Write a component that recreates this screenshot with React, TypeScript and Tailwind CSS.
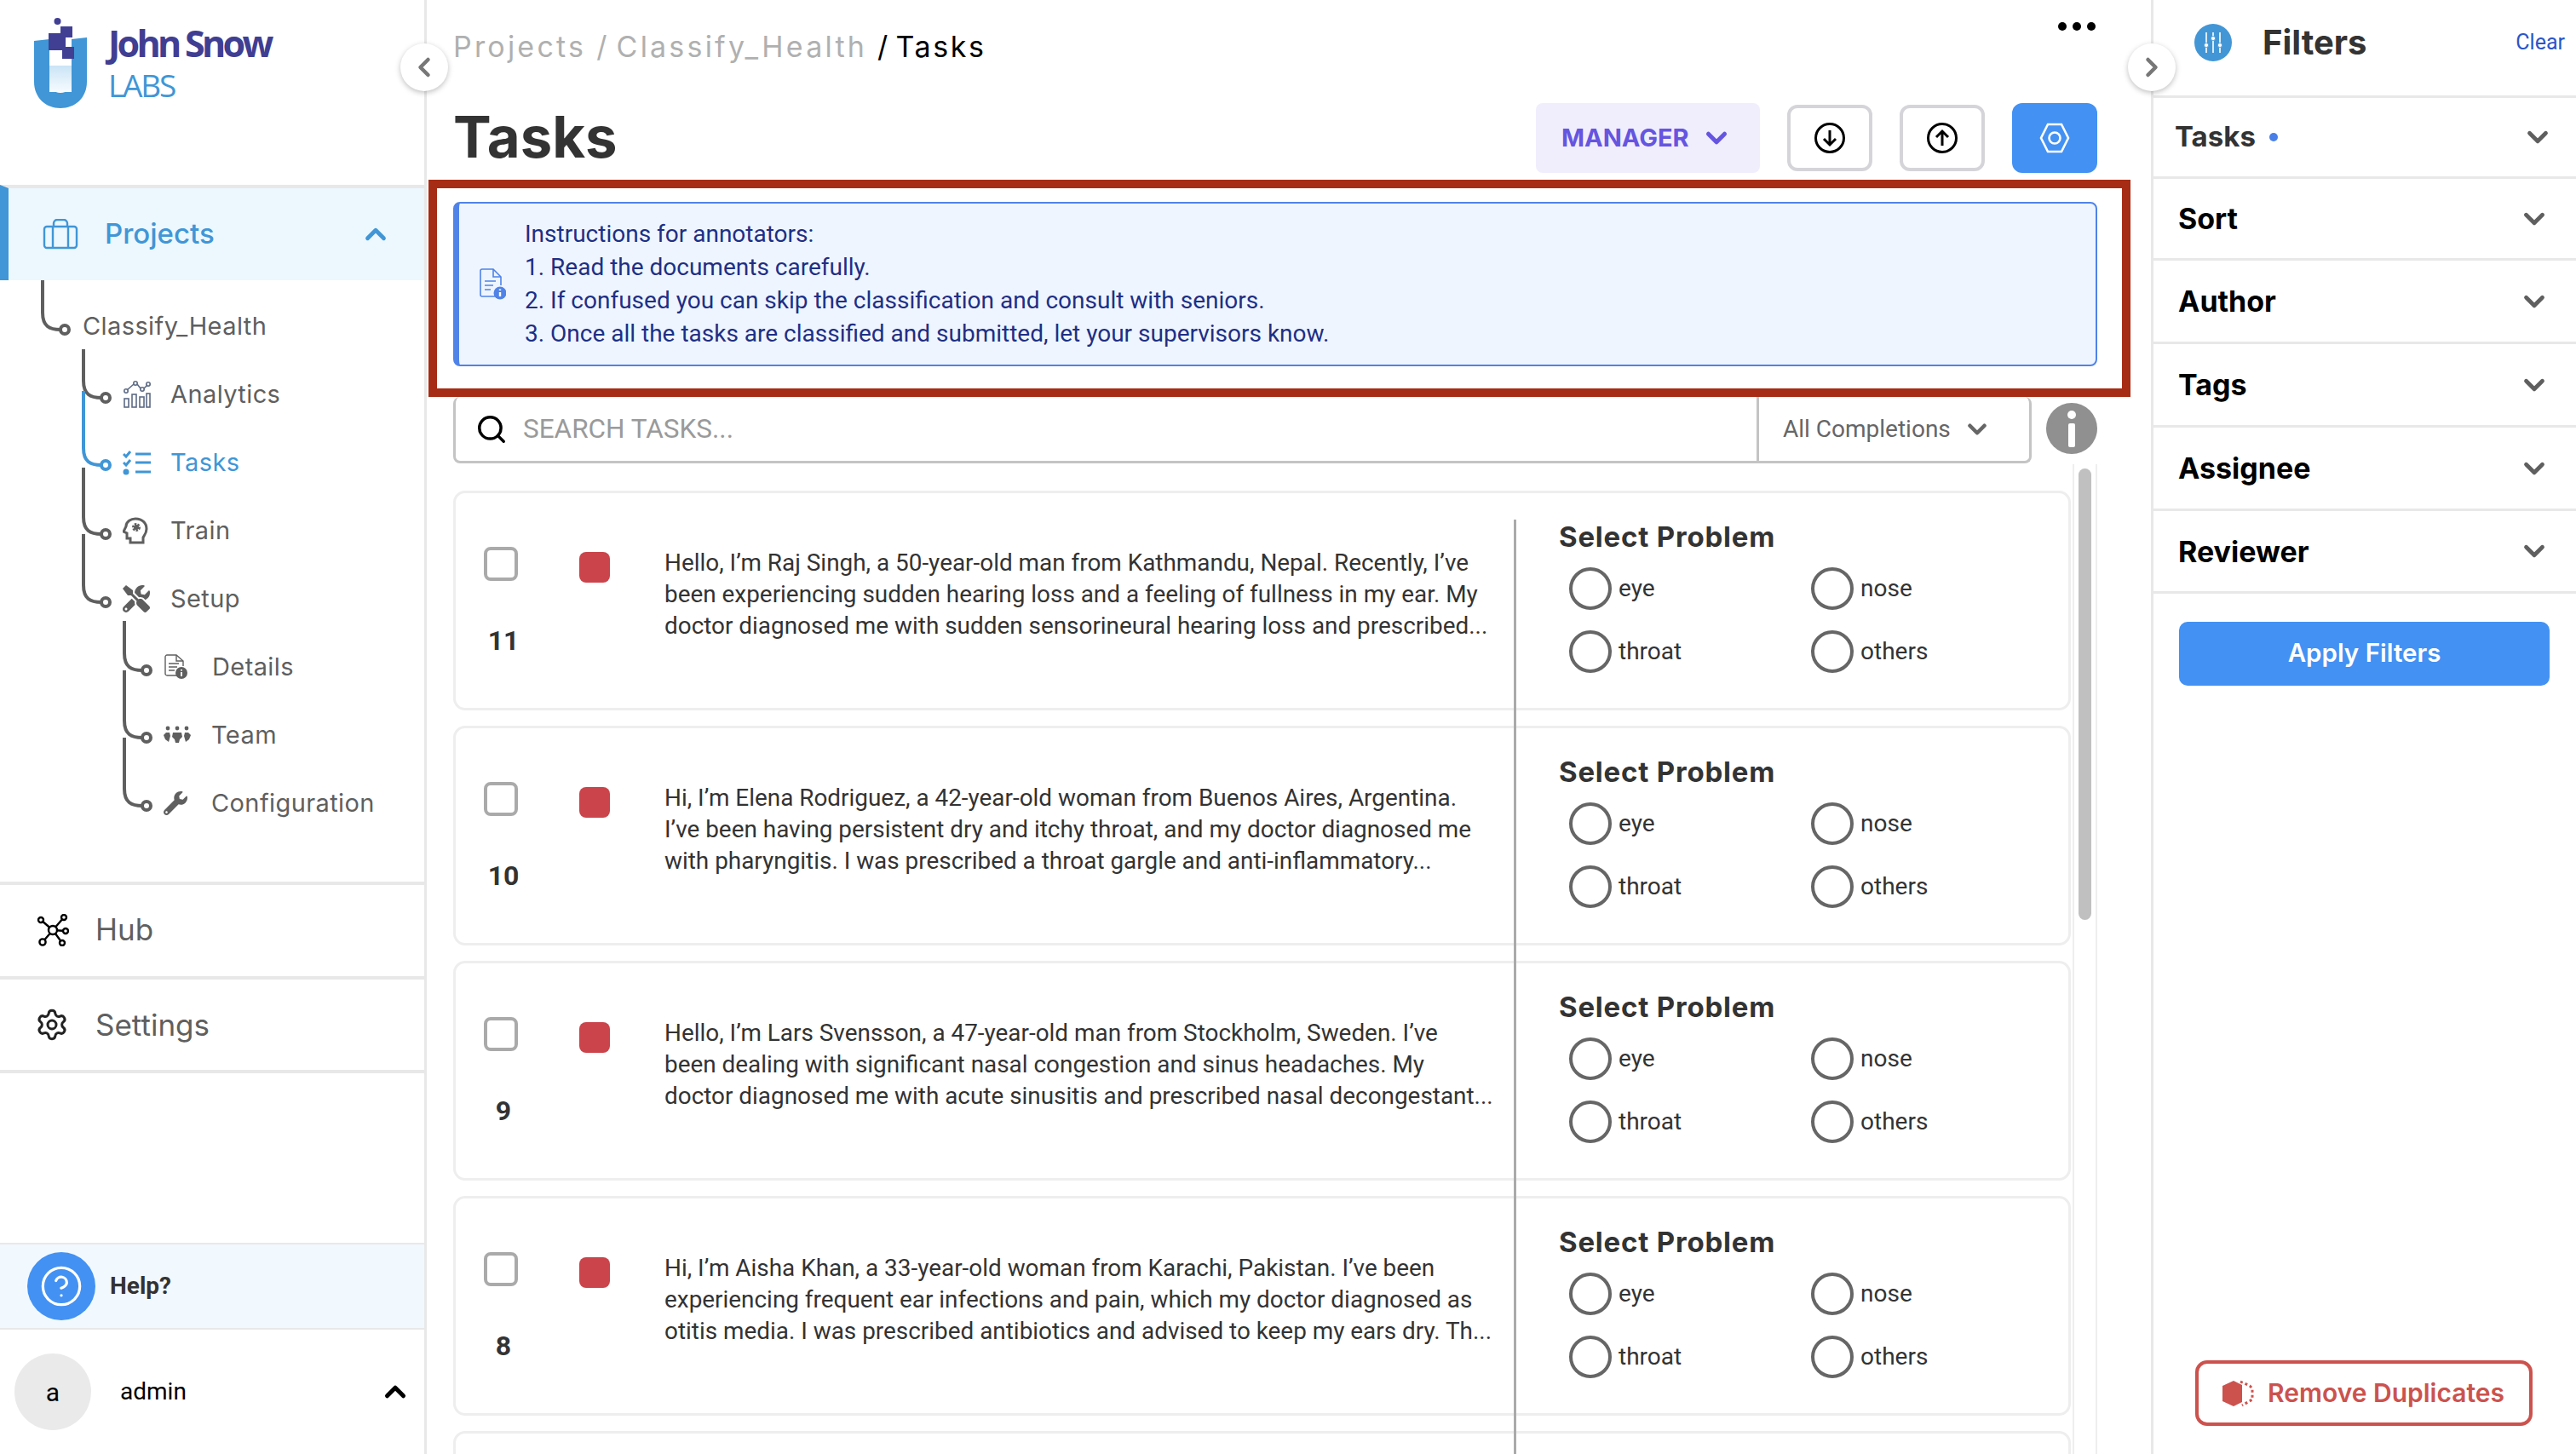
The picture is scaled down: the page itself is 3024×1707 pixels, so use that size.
import { ChevronDown, ChevronLeft, ChevronRight, ChevronUp, Search, Settings, CircleHelp } from "lucide-react";
import { FaTools, FaWrench } from "react-icons/fa";

const heading = "[font-family:Inter,sans-serif]";

const tasks = [
    {
        id: 11,
        lines: [
            "Hello, I’m Raj Singh, a 50-year-old man from Kathmandu, Nepal. Recently, I’ve",
            "been experiencing sudden hearing loss and a feeling of fullness in my ear. My",
            "doctor diagnosed me with sudden sensorineural hearing loss and prescribed...",
        ],
    },
    {
        id: 10,
        lines: [
            "Hi, I’m Elena Rodriguez, a 42-year-old woman from Buenos Aires, Argentina.",
            "I’ve been having persistent dry and itchy throat, and my doctor diagnosed me",
            "with pharyngitis. I was prescribed a throat gargle and anti-inflammatory...",
        ],
    },
    {
        id: 9,
        lines: [
            "Hello, I’m Lars Svensson, a 47-year-old man from Stockholm, Sweden. I’ve",
            "been dealing with significant nasal congestion and sinus headaches. My",
            "doctor diagnosed me with acute sinusitis and prescribed nasal decongestant...",
        ],
    },
    {
        id: 8,
        lines: [
            "Hi, I’m Aisha Khan, a 33-year-old woman from Karachi, Pakistan. I’ve been",
            "experiencing frequent ear infections and pain, which my doctor diagnosed as",
            "otitis media. I was prescribed antibiotics and advised to keep my ears dry. Th...",
        ],
    },
];

const filters = [
    { label: "Sort", h: "h-[96px]" },
    { label: "Author", h: "h-[98px]" },
    { label: "Tags", h: "h-[98px]" },
    { label: "Assignee", h: "h-[98px]" },
    { label: "Reviewer", h: "h-[97px]" },
];

function Logo() {
    return (
        <svg width="112" height="130" viewBox="0 0 112 130" className="shrink-0">
            <defs>
                <linearGradient id="tube" x1="0" y1="0" x2="0" y2="1">
                    <stop offset="0" stopColor="#c9e4f6" />
                    <stop offset="1" stopColor="#f7fbfe" />
                </linearGradient>
            </defs>
            <path d="M40 48 L58 46 V96 C58 104 63 109 71 109 C79 109 84 104 84 96 V46 L102 44 V96 C102 115 88 127 71 127 C54 127 40 115 40 96 Z" fill="#4096d6" />
            <rect x="58" y="77" width="26" height="31" fill="url(#tube)" />
            <circle cx="67.5" cy="25" r="4" fill="#413f93" />
            <path d="M71 31 H85 V44 H77 V55 H87 V69 H73 V59 H57 V39 H71 Z" fill="#413f93" />
        </svg>
    );
}

function TreeLines() {
    // y coordinates are relative to the top of the tree, which starts at 329
    const elbow = (x: number, y0: number, y1: number, color: string) => (
        <g fill="none" stroke={color} strokeWidth="4">
            <path d={`M${x} ${y0} V${y1 - 20} C${x} ${y1 - 4} ${x + 8} ${y1} ${x + 21} ${y1}`} />
            <circle cx={x + 26} cy={y1} r="5" fill="#fff" />
        </g>
    );
    return (
        <svg width="200" height="706" className="absolute left-0 top-0">
            {elbow(50, 0, 58, "#5f5f5f")}
            {elbow(98, 81, 138, "#5f5f5f")}
            {elbow(98, 298, 378, "#5f5f5f")}
            {elbow(98, 220, 298, "#5f5f5f")}
            {elbow(98, 130, 217, "#4096d6")}
            {elbow(146, 400, 458, "#5f5f5f")}
            {elbow(146, 458, 537, "#5f5f5f")}
            {elbow(146, 537, 617, "#5f5f5f")}
        </svg>
    );
}

function AnalyticsIcon() {
    return (
        <svg width="34" height="34" viewBox="0 0 34 34" fill="none" stroke="#5d6b85" strokeWidth="1.6">
            <rect x="2" y="22" width="5" height="10" />
            <rect x="11" y="17" width="5" height="15" />
            <rect x="20" y="20" width="5" height="12" />
            <rect x="28" y="16" width="4" height="16" />
            <path d="M5 12 L13 5 M17 5 L21 10 M25 10 L29 6" />
            <circle cx="4" cy="13" r="2.2" />
            <circle cx="15" cy="4" r="2.2" />
            <circle cx="23" cy="11" r="2.2" />
            <circle cx="30" cy="5" r="2.2" />
        </svg>
    );
}

function TasksIcon() {
    return (
        <svg width="34" height="30" viewBox="0 0 34 30" fill="none" stroke="#4096d6" strokeWidth="3">
            <path d="M1 5 L4 8 L9 2 M1 15 L4 18 L9 12" />
            <circle cx="4" cy="26" r="2" fill="#4096d6" />
            <path d="M15 5 H33 M15 15 H33 M15 26 H33" />
        </svg>
    );
}

function TrainIcon() {
    return (
        <svg width="30" height="32" viewBox="0 0 30 32" fill="none" stroke="#5f5f5f" strokeWidth="3">
            <path d="M9 30 V25 H5 V19 L1 17 L4 11 C4 5 10 2 15 2 C23 2 28 7 28 14 C28 19 25 22 24 24 V30 Z" />
            <circle cx="16" cy="12" r="3" fill="#5f5f5f" stroke="#5f5f5f" strokeDasharray="2 1" strokeWidth="4" />
        </svg>
    );
}

function DetailsIcon() {
    return (
        <svg width="28" height="30" viewBox="0 0 28 30" fill="none" stroke="#5f5f5f" strokeWidth="1.4">
            <path d="M16 25 H3 C2 25 1 24 1 23 V3 C1 2 2 1 3 1 H14 L22 8 V14" />
            <path d="M14 1 V8 H22 M5 11 H17 M5 15 H15 M5 19 H12" />
            <circle cx="20" cy="22" r="7" fill="#5f5f5f" stroke="none" />
            <path d="M20 21 V26 M20 18 V19.5" stroke="#fff" strokeWidth="2" />
        </svg>
    );
}

function TeamIcon() {
    return (
        <svg width="32" height="22" viewBox="0 0 32 22" fill="#5f5f5f">
            <circle cx="5" cy="3" r="2.4" />
            <circle cx="16" cy="3" r="2.4" />
            <circle cx="27" cy="3" r="2.4" />
            <path d="M3 8 H7 L8 12 L6 19 L2 16 L0 11 Z" />
            <path d="M11 8 H21 L22 13 L19 16 L18 20 H14 L13 16 L10 13 Z" />
            <path d="M25 8 H29 L32 11 L30 16 L26 19 L24 12 Z" />
        </svg>
    );
}

function HubIcon() {
    return (
        <svg width="38" height="38" viewBox="0 0 38 38" fill="#fff" stroke="#000" strokeWidth="2.4">
            <path d="M19 19 L5 7 M19 19 L32 4 M19 19 L35 20 M19 19 L7 33 M19 19 L30 34" fill="none" />
            <circle cx="19" cy="19" r="5" />
            <circle cx="5" cy="7" r="3" />
            <circle cx="32" cy="4" r="3" />
            <circle cx="34" cy="20" r="3" />
            <circle cx="7" cy="33" r="3.6" />
            <circle cx="30" cy="34" r="3" />
        </svg>
    );
}

function BriefcaseIcon() {
    return (
        <svg width="42" height="36" viewBox="0 0 42 36" fill="none" stroke="#4096d6" strokeWidth="2.4">
            <rect x="2" y="9" width="38" height="25" rx="3" />
            <path d="M12 34 V9 M30 34 V9 M13 9 V5 C13 3 15 1 17 1 H25 C27 1 29 3 29 5 V9" />
        </svg>
    );
}

function TreeRow({ left, icon, label, active }: { left: string; icon?: React.ReactNode; label: string; active?: boolean }) {
    return (
        <div className={`flex h-[80px] items-center ${left}`}>
            {icon && <span className="flex w-[56px] shrink-0 items-center">{icon}</span>}
            <span className={`${heading} text-[29px] tracking-[0.4px] ${active ? "text-[#4096d6]" : "text-[#5f5f5f]"}`}>{label}</span>
        </div>
    );
}

function Radio({ label }: { label: string }) {
    return (
        <div className="flex h-[50px] items-center gap-[8px]">
            <span className="h-[50px] w-[50px] shrink-0 rounded-full border-[4px] border-[#666]" />
            <span className="text-[28px] text-[#333]">{label}</span>
        </div>
    );
}

function TaskCard({ id, lines }: { id?: number; lines?: string[] }) {
    return (
        <div className="flex h-[258px] shrink-0 rounded-[14px] border-[3px] border-[#eeeeee] bg-white">
            {id !== undefined && lines && (
                <>
                    <div className="flex w-[145px] shrink-0 flex-col pl-[33px] pt-[63px]">
                        <span className="h-[40px] w-[40px] rounded-[8px] border-[4px] border-[#aaa]" />
                        <span className="mt-[50px] w-[46px] text-center text-[32px] font-bold leading-[40px] text-[#333]">{id}</span>
                    </div>
                    <div className="w-[100px] shrink-0 pt-[69px]">
                        <span className="block h-[36px] w-[36px] rounded-[8px] bg-[#cb444b]" />
                    </div>
                    <div className="w-[998px] shrink-0 pt-[63px] text-[27.9px] leading-[37px] text-[#333]">
                        {lines.map((line) => (
                            <div key={line} className="whitespace-nowrap">{line}</div>
                        ))}
                    </div>
                    <div className="pl-[52px] pt-[31px]">
                        <div className={`${heading} text-[33px] font-bold leading-[40px] tracking-[0.8px] text-[#333]`}>Select Problem</div>
                        <div className="mt-[16px] grid grid-cols-[284px_284px] gap-y-[24px] pl-[12px]">
                            <Radio label="eye" />
                            <Radio label="nose" />
                            <Radio label="throat" />
                            <Radio label="others" />
                        </div>
                    </div>
                </>
            )}
        </div>
    );
}

export default function App() {
    return (
        <div className="relative flex h-[1707px] w-[3024px] overflow-hidden bg-white [font-family:Roboto,sans-serif]">
            {/* sidebar */}
            <aside className="flex w-[501px] shrink-0 flex-col border-r-[3px] border-[#e8e8e8]">
                <div className="flex h-[217px] shrink-0 items-start">
                    <Logo />
                    <div className="pl-[15px] pt-[26px] [font-family:'Open_Sans',sans-serif]">
                        <div className="text-[43px] font-bold leading-[50px] tracking-[-3.7px] text-[#3f3e92]">John Snow</div>
                        <div className="mt-[2px] text-[37px] leading-[44px] tracking-[-2.2px] text-[#4096d6]">LABS</div>
                    </div>
                </div>
                <div className="flex h-[112px] shrink-0 items-center border-l-[10px] border-t-[4px] border-l-[#4096d6] border-t-[#e8e8e8] bg-[#ecf7fe] pl-[40px] pr-[38px]">
                    <BriefcaseIcon />
                    <span className={`${heading} ml-[31px] flex-1 text-[33px] font-medium text-[#4096d6]`}>Projects</span>
                    <ChevronUp size={38} strokeWidth={3} className="text-[#4096d6]" />
                </div>
                <div className="relative h-[706px] shrink-0 pt-[14px]">
                    <TreeLines />
                    <TreeRow left="pl-[97px]" label="Classify_Health" />
                    <TreeRow left="pl-[144px]" icon={<AnalyticsIcon />} label="Analytics" />
                    <TreeRow left="pl-[144px]" icon={<TasksIcon />} label="Tasks" active />
                    <TreeRow left="pl-[144px]" icon={<TrainIcon />} label="Train" />
                    <TreeRow left="pl-[144px]" icon={<FaTools size={32} color="#5f5f5f" />} label="Setup" />
                    <TreeRow left="pl-[193px]" icon={<DetailsIcon />} label="Details" />
                    <TreeRow left="pl-[192px]" icon={<TeamIcon />} label="Team" />
                    <TreeRow left="pl-[192px]" icon={<FaWrench size={28} color="#5f5f5f" />} label="Configuration" />
                </div>
                <div className="flex h-[111px] shrink-0 items-center gap-[31px] border-t-[4px] border-[#e8e8e8] pb-[2px] pl-[43px]">
                    <HubIcon />
                    <span className={`${heading} text-[35px] text-[#5f5f5f]`}>Hub</span>
                </div>
                <div className="flex h-[114px] shrink-0 items-center gap-[31px] border-y-[4px] border-[#e8e8e8] pl-[41px]">
                    <Settings size={40} strokeWidth={1.8} className="text-[#222]" />
                    <span className={`${heading} text-[35px] text-[#5f5f5f]`}>Settings</span>
                </div>
                <div className="flex-1" />
                <div className="flex h-[102px] shrink-0 items-center gap-[17px] border-y-[2px] border-[#e8e8e8] bg-[#f1f9fe] pl-[32px]">
                    <span className="flex h-[80px] w-[80px] items-center justify-center rounded-full bg-[#4391f3]">
                        <CircleHelp size={52} strokeWidth={1.5} className="text-white" />
                    </span>
                    <span className="text-[28px] font-bold text-[#333]">Help?</span>
                </div>
                <div className="flex h-[146px] shrink-0 items-center pl-[17px] pr-[15px]">
                    <span className="flex h-[90px] w-[90px] items-center justify-center rounded-full bg-[#eaeaea] text-[30px] text-black">a</span>
                    <span className="ml-[34px] flex-1 text-[28px] text-black">admin</span>
                    <ChevronUp size={38} strokeWidth={3.2} className="text-black" />
                </div>
            </aside>

            {/* main */}
            <main className="flex min-w-0 flex-1 flex-col pl-[31px] pr-[63px]">
                <div className="flex h-[121px] shrink-0 items-start justify-between pt-[26px]">
                    <div className={`${heading} mt-[9px] flex text-[34px] leading-[40px] tracking-[3.2px] text-[#b0b0b0]`}>
                        <span>Projects</span>
                        <span className="ml-[12px]">/</span>
                        <span className="ml-[8px]">Classify_Health</span>
                        <span className="ml-[12px] text-black">/</span>
                        <span className="ml-[6px] tracking-[2.6px] text-black">Tasks</span>
                    </div>
                    <div className="flex gap-[7px] pr-[2px]">
                        <span className="h-[10px] w-[10px] rounded-full bg-black" />
                        <span className="h-[10px] w-[10px] rounded-full bg-black" />
                        <span className="h-[10px] w-[10px] rounded-full bg-black" />
                    </div>
                </div>
                <div className="flex h-[82px] shrink-0 items-center">
                    <h1 className={`${heading} -mt-[2px] flex-1 text-[67px] font-bold text-[#333]`}>Tasks</h1>
                    <button className={`${heading} flex h-[82px] w-[263px] items-center gap-[13px] rounded-[8px] bg-[#f0eefd] pl-[30px] text-[29px] font-bold text-[#6555e0]`}>
                        MANAGER
                        <ChevronDown size={38} strokeWidth={3.2} />
                    </button>
                    <button className="ml-[32px] flex h-[78px] w-[100px] items-center justify-center rounded-[12px] border-[4px] border-[#d5d5d9]">
                        <svg width="36" height="36" viewBox="0 0 36 36" fill="none" stroke="#000" strokeWidth="3">
                            <circle cx="18" cy="18" r="16.5" />
                            <path d="M18 9 V26 M11 19 L18 26 L25 19" />
                        </svg>
                    </button>
                    <button className="ml-[32px] flex h-[78px] w-[100px] items-center justify-center rounded-[12px] border-[4px] border-[#d5d5d9]">
                        <svg width="36" height="36" viewBox="0 0 36 36" fill="none" stroke="#000" strokeWidth="3">
                            <circle cx="18" cy="18" r="16.5" />
                            <path d="M18 27 V10 M11 17 L18 10 L25 17" />
                        </svg>
                    </button>
                    <button className="ml-[32px] flex h-[82px] w-[100px] items-center justify-center rounded-[12px] bg-[#4391f3]">
                        <svg width="36" height="36" viewBox="0 0 36 36" fill="none" stroke="#fff" strokeWidth="2.6">
                            <path d="M10 2 H26 L34 18 L26 34 H10 L2 18 Z" />
                            <circle cx="18" cy="18" r="6.5" />
                        </svg>
                    </button>
                </div>
                <div className="mt-[34px] flex h-[193px] shrink-0 items-center rounded-[8px] border-[2px] border-l-[7px] border-[#4f83e8] bg-[#eef5fe]">
                    <svg width="32" height="38" viewBox="0 0 32 38" fill="none" stroke="#4f83e8" strokeWidth="1.6" className="ml-[23px] mr-[22px] shrink-0">
                        <path d="M20 33 H4 C3 33 2 32 2 31 V3 C2 2 3 1 4 1 H17 L26 10 V20" />
                        <path d="M17 1 V10 H26 M7 15 H20 M7 20 H17 M7 25 H14" />
                        <circle cx="25" cy="29" r="7.5" fill="#4f83e8" stroke="none" />
                        <path d="M25 28 V33 M25 24.5 V26" stroke="#fff" strokeWidth="2.4" />
                    </svg>
                    <div className="-mt-[2px] text-[28px] leading-[39px] text-[#1e2f85]">
                        <div>Instructions for annotators:</div>
                        <div>1. Read the documents carefully.</div>
                        <div>2. If confused you can skip the classification and consult with seniors.</div>
                        <div>3. Once all the tasks are classified and submitted, let your supervisors know.</div>
                    </div>
                </div>
                <div className="mt-[36px] flex h-[78px] shrink-0 gap-[17px]">
                    <div className="flex flex-1 rounded-[8px] border-[3px] border-t-0 border-[#c4c4c4]">
                        <div className="flex flex-1 items-center pl-[23px]">
                            <Search size={38} strokeWidth={2.2} className="text-black" />
                            <span className="ml-[18px] text-[31.5px] text-[#9a9a9a]">SEARCH TASKS...</span>
                        </div>
                        <div className="flex w-[320px] items-center border-l-[3px] border-[#c4c4c4] pl-[28px] text-[28px] text-[#666]">
                            All Completions
                            <ChevronDown size={34} strokeWidth={3.2} className="ml-[14px]" />
                        </div>
                    </div>
                    <div className="mt-[7px] flex h-[60px] w-[60px] items-center justify-center self-start rounded-full bg-[#909090]">
                        <svg width="12" height="44" viewBox="0 0 12 44" fill="#fff">
                            <circle cx="6" cy="6" r="5" />
                            <rect x="2" y="16" width="8" height="28" rx="2" />
                        </svg>
                    </div>
                </div>
                <div className="mt-[1px] flex min-h-0 flex-1 gap-[2px]">
                    <div className="relative flex flex-1 flex-col gap-[18px] overflow-hidden pt-[31px]">
                        {tasks.map((t) => (
                            <TaskCard key={t.id} id={t.id} lines={t.lines} />
                        ))}
                        <TaskCard />
                        <div className="absolute bottom-0 left-[1245px] top-[65px] w-[3px] bg-[#aaa]" />
                    </div>
                    <div className="w-[29px] shrink-0 border-x-[2px] border-[#eeeeee] px-[5px] pt-[5px]">
                        <div className="h-[530px] w-[15px] rounded-full bg-[#c0c0c0]" />
                    </div>
                </div>
            </main>

            {/* filters */}
            <aside className="flex w-[499px] shrink-0 flex-col border-l-[3px] border-[#e8e8e8]">
                <div className="flex h-[115px] shrink-0 items-center border-b-[3px] border-[#e8e8e8] pb-[13px] pl-[48px] pr-[13px]">
                    <span className="flex h-[44px] w-[44px] items-center justify-center rounded-full bg-[#4296d6]">
                        <svg width="24" height="26" viewBox="0 0 24 26" fill="#fff" stroke="#fff" strokeWidth="1.6">
                            <path d="M4 1 V25 M12 1 V25 M20 1 V25" />
                            <circle cx="4" cy="16" r="2.6" stroke="#4296d6" strokeWidth="0.8" />
                            <circle cx="12" cy="8" r="2.6" stroke="#4296d6" strokeWidth="0.8" />
                            <circle cx="20" cy="16" r="2.6" stroke="#4296d6" strokeWidth="0.8" />
                        </svg>
                    </span>
                    <span className={`${heading} ml-[36px] flex-1 text-[40px] font-bold text-[#333]`}>Filters</span>
                    <span className="text-[25px] text-[#2c55c8]">Clear</span>
                </div>
                <div className="flex h-[95px] shrink-0 items-center border-b-[3px] border-[#e8e8e8] pl-[25px] pr-[26px]">
                    <span className={`${heading} text-[33px] font-bold text-[#333]`}>Tasks</span>
                    <span className="ml-[16px] h-[10px] w-[10px] rounded-full bg-[#4a7fe8]" />
                    <span className="flex-1" />
                    <ChevronDown size={38} strokeWidth={3} className="text-[#5f5f5f]" />
                </div>
                {filters.map((f) => (
                    <div key={f.label} className={`flex ${f.h} shrink-0 items-center justify-between border-b-[3px] border-[#e8e8e8] pl-[29px] pr-[30px]`}>
                        <span className={`${heading} text-[34px] font-bold text-black`}>{f.label}</span>
                        <ChevronDown size={38} strokeWidth={3} className="text-[#5f5f5f]" />
                    </div>
                ))}
                <div className="px-[30px] pt-[33px]">
                    <button className={`${heading} flex h-[75px] w-[435px] items-center justify-center rounded-[10px] bg-[#4391f3] pb-[2px] text-[29.5px] font-semibold text-white`}>
                        Apply Filters
                    </button>
                </div>
                <div className="flex-1" />
                <div className="pb-[33px] pl-[49px]">
                    <button className={`${heading} flex h-[77px] w-[396px] items-center gap-[16px] rounded-[14px] border-[4px] border-[#cc524e] pl-[27px] text-[30px] font-semibold text-[#cc524e]`}>
                        <svg width="38" height="32" viewBox="0 0 38 32" fill="#cc524e">
                            <path d="M14 1 L24 6 V26 L14 31 L1 25 V7 Z" />
                            <path d="M22 2 L33 7 L36 10 V23 L24 30" fill="none" stroke="#cc524e" strokeWidth="3" strokeDasharray="3 3" />
                        </svg>
                        Remove Duplicates
                    </button>
                </div>
            </aside>

            {/* annotation box over the instructions */}
            <div className="absolute left-[503px] top-[211px] h-[255px] w-[1998px] border-[10px] border-[#a62c15]" />

            {/* collapse toggles */}
            <button className="absolute left-[470px] top-[51px] flex h-[56px] w-[56px] items-center justify-center rounded-full bg-white shadow-[0_2px_6px_rgba(0,0,0,0.25)]">
                <ChevronLeft size={36} strokeWidth={3} className="text-[#777]" />
            </button>
            <button className="absolute left-[2498px] top-[51px] flex h-[56px] w-[56px] items-center justify-center rounded-full bg-white shadow-[0_2px_6px_rgba(0,0,0,0.25)]">
                <ChevronRight size={36} strokeWidth={3} className="text-[#777]" />
            </button>
        </div>
    );
}
